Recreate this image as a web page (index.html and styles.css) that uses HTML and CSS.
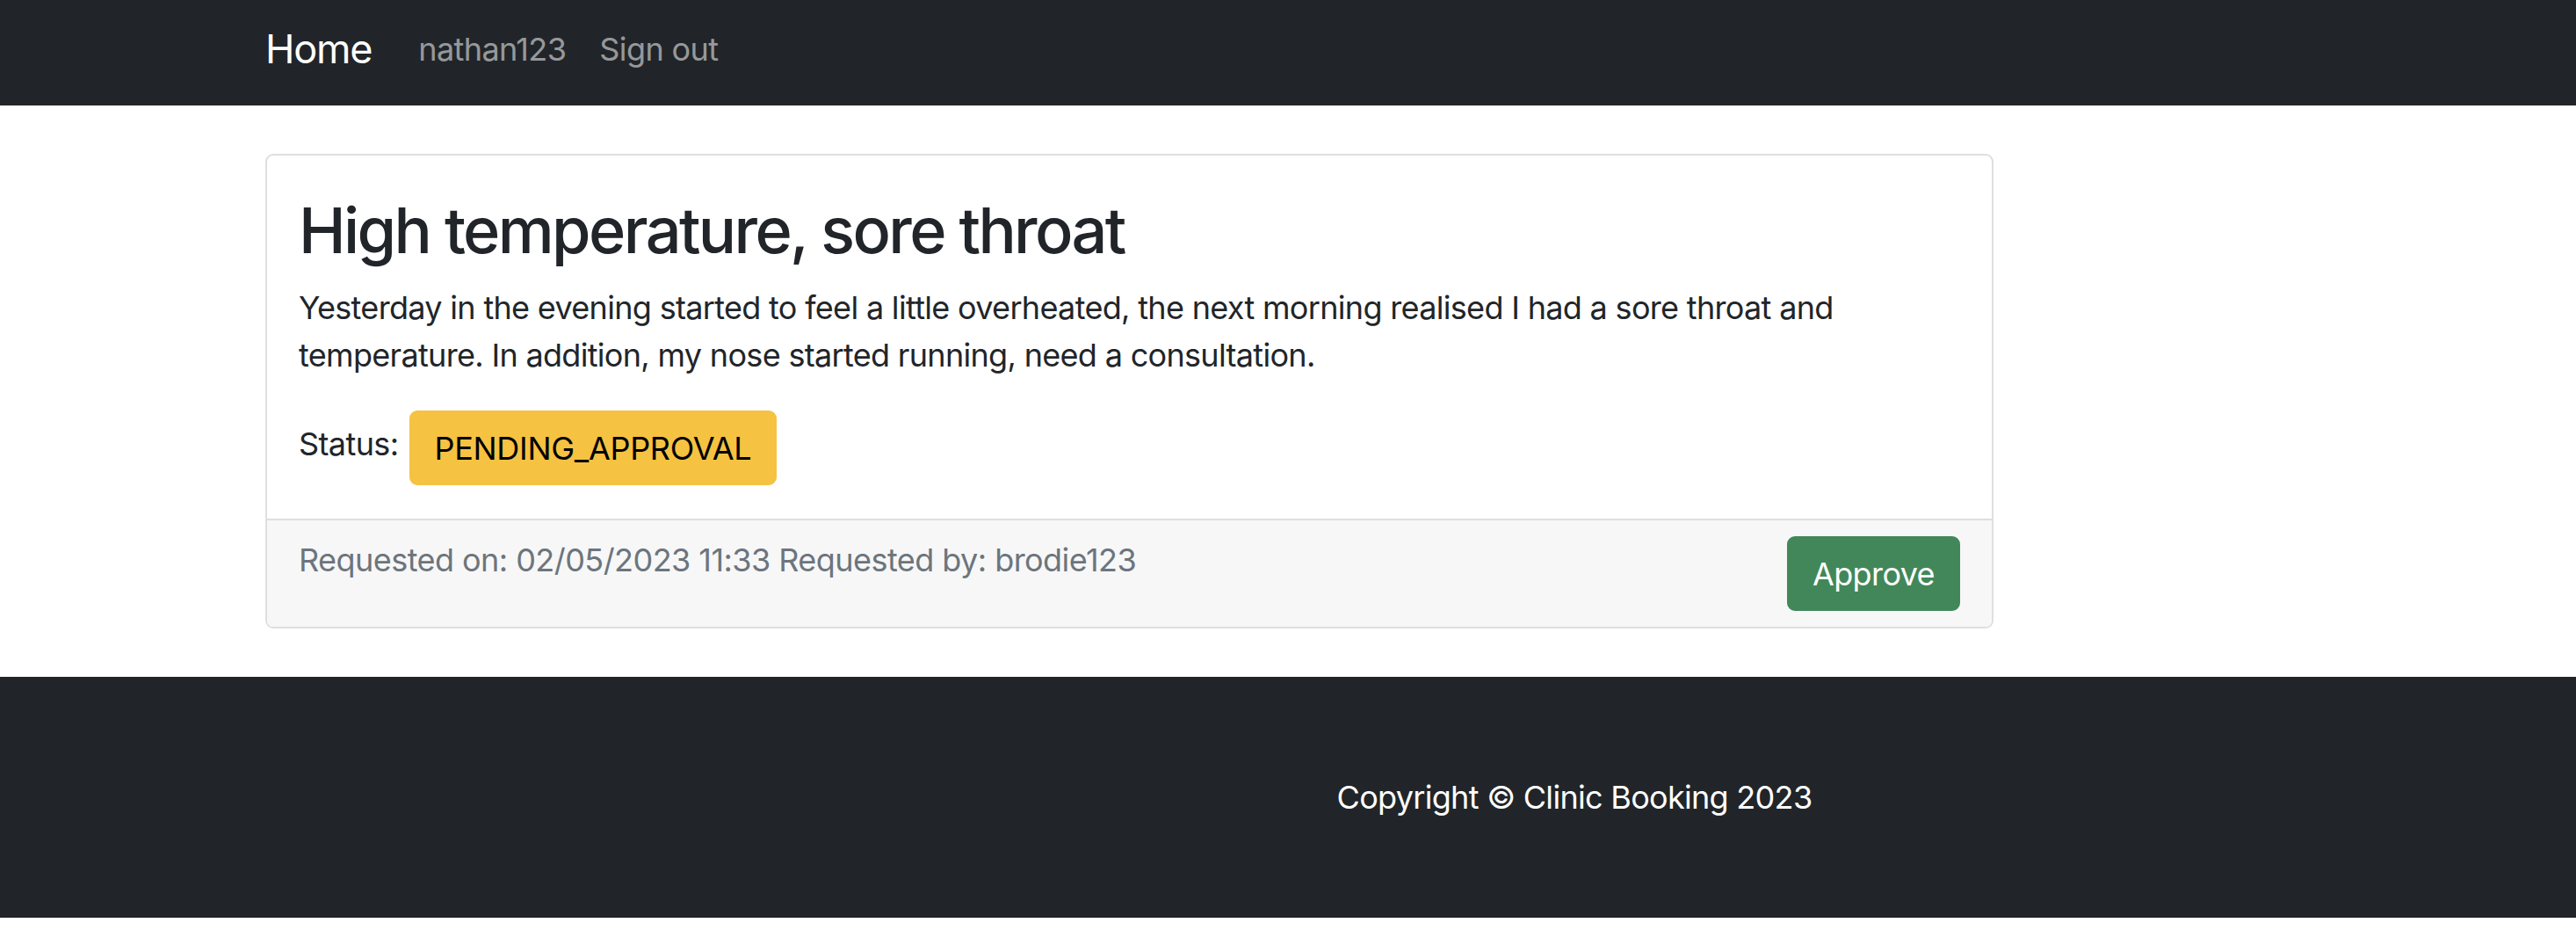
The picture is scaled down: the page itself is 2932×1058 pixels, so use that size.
FILE: index.html
```html
<!DOCTYPE html>
<html lang="en">
<head>
<meta charset="utf-8">
<title>Clinic Booking</title>
<link rel="stylesheet" href="styles.css">
</head>
<body>
<nav class="navbar">
  <div class="container nav-inner">
    <a class="brand" href="#">Home</a>
    <a class="nav-link first" href="#">nathan123</a>
    <a class="nav-link" href="#">Sign out</a>
  </div>
</nav>
<main class="main">
  <div class="container">
    <div class="card">
      <div class="card-body">
        <h2 class="card-title">High temperature, sore throat</h2>
        <p class="card-text">Yesterday in the evening started to feel a little overheated, the next morning realised I had a sore throat and temperature. In addition, my nose started running, need a consultation.</p>
        <div class="status-row">
          <span class="status-label">Status:</span>
          <span class="badge">PENDING_APPROVAL</span>
        </div>
      </div>
      <div class="card-footer">
        <span class="meta">Requested on: 02/05/2023 11:33 Requested by: brodie123</span>
        <button class="btn-approve" type="button">Approve</button>
      </div>
    </div>
  </div>
</main>
<footer class="footer">
  <p class="copyright">Copyright © Clinic Booking 2023</p>
</footer>
</body>
</html>
```

FILE: styles.css
```css
* { box-sizing: border-box; }
html, body { margin: 0; padding: 0; }
body {
  font-family: Inter, "Noto Sans", "Liberation Sans", sans-serif;
  color: #212529;
  background: #ffffff;
  padding-bottom: 14px;
}
.container {
  width: 2328px;
  margin: 0 auto;
}
.navbar {
  background: #212529;
  height: 120px;
  padding-bottom: 9px;
  display: flex;
  align-items: center;
}
.nav-inner {
  display: flex;
  align-items: center;
}
.brand {
  color: #ffffff;
  text-decoration: none;
  font-size: 45px;
  line-height: 67.5px;
  letter-spacing: -1.2px;
  margin-right: 36px;
}
.nav-link {
  color: rgba(255, 255, 255, 0.55);
  text-decoration: none;
  font-size: 36px;
  line-height: 54px;
  letter-spacing: -0.6px;
  padding: 0 20px 0 18px;
}
.nav-link.first { padding-left: 17px; }
.main {
  padding-top: 55px;
  padding-bottom: 55px;
}
.card {
  width: 1967px;
  border: 2px solid #dfdfdf;
  border-radius: 9px;
  overflow: hidden;
  background: #ffffff;
}
.card-body {
  padding: 42px 36px 38px 36px;
}
.card-title {
  font-size: 72px;
  font-weight: 500;
  line-height: 1.2;
  letter-spacing: -2.6px;
  margin: 0 0 18px 0;
}
.card-text {
  font-size: 36px;
  line-height: 54px;
  letter-spacing: -0.68px;
  margin: 0 0 36px 0;
}
.status-row {
  display: flex;
  align-items: flex-start;
  gap: 12px;
}
.status-label {
  font-size: 36px;
  line-height: 54px;
  letter-spacing: -0.6px;
  padding-top: 11px;
}
.badge {
  display: inline-block;
  font-size: 36px;
  line-height: 54px;
  letter-spacing: -0.3px;
  padding: 13.5px 27px;
  border: 2px solid #f5c242;
  border-radius: 9px;
  background: #f5c242;
  color: #000000;
}
.card-footer {
  background: #f7f7f7;
  border-top: 2px solid #dfdfdf;
  padding: 18px 36px;
  display: flex;
  justify-content: space-between;
  align-items: flex-start;
}
.meta {
  font-size: 36px;
  line-height: 54px;
  letter-spacing: -0.55px;
  color: #6c757d;
}
.btn-approve {
  font-family: inherit;
  font-size: 36px;
  line-height: 54px;
  letter-spacing: -0.6px;
  padding: 13.5px 27px;
  border: 2px solid #428759;
  border-radius: 9px;
  background: #428759;
  color: #ffffff;
  cursor: pointer;
}
.footer {
  background: #212529;
  height: 274px;
  display: flex;
  align-items: center;
  justify-content: center;
  padding-left: 652px;
}
.copyright {
  margin: 0;
  color: #ffffff;
  font-size: 36px;
  line-height: 54px;
  letter-spacing: -0.7px;
}
```
